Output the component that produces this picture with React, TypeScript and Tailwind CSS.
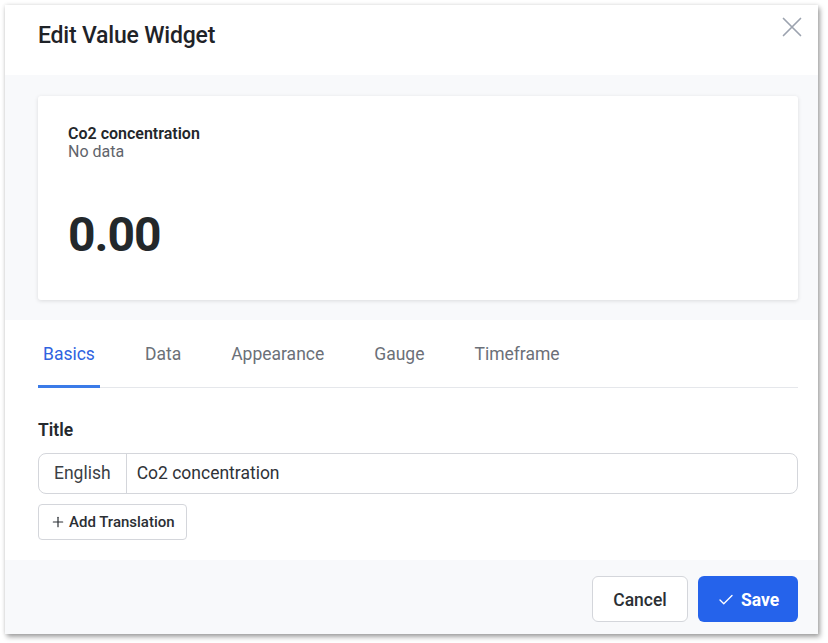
import { Plus, Check } from "lucide-react";

const tabs = ["Basics", "Data", "Appearance", "Gauge", "Timeframe"];

export default function App() {
  return (
    <div
      className="min-h-[643px] w-[828px] bg-white pl-[5px] pt-[5px]"
      style={{ fontFamily: "Roboto, 'Noto Sans', sans-serif" }}
    >
      <div className="flex h-[629px] w-[813px] flex-col bg-white shadow-[2px_3px_5px_rgba(0,0,0,0.35),0_0_4px_rgba(0,0,0,0.12)]">
        {/* header */}
        <div className="relative flex h-[70px] items-center pb-[8px] pl-[33px] pr-[20px]">
          <h2 className="text-[23px] font-medium tracking-[-0.2px] text-[#1f2328]">Edit Value Widget</h2>
          <button type="button" className="absolute right-[16px] top-[12px] text-[#9ca3af]" aria-label="Close">
            <svg width="20" height="20" viewBox="0 0 20 20" fill="none" stroke="currentColor" strokeWidth="1.7" strokeLinecap="round">
              <path d="M1.5 1.5l17 17M18.5 1.5l-17 17" />
            </svg>
          </button>
        </div>

        {/* preview */}
        <div className="bg-[#f8f9fb] pb-[20px] pl-[33px] pr-[20px] pt-[21px]">
          <div className="h-[204px] rounded-[3px] bg-white px-[30px] pt-[29px] shadow-[0_1px_4px_rgba(0,0,0,0.12)]">
            <div className="text-[16px] font-semibold leading-[18px] text-[#23272b]">Co2 concentration</div>
            <div className="text-[16px] leading-[18px] text-[#5f646b]">No data</div>
            <div className="mt-[46px] text-[48px] font-bold leading-[56px] tracking-[-1px] text-[#23282b]">0.00</div>
          </div>
        </div>

        {/* body */}
        <div className="flex-1 pl-[33px] pr-[20px] pt-[22px]">
          <div className="flex border-b border-[#e5e7eb]">
            <div className="flex gap-[40px]">
              {tabs.map((t, i) => (
                <button
                  key={t}
                  type="button"
                  className={`-mb-px border-b-[3px] px-[5px] pb-[19px] text-[17.5px] leading-6 ${
                    i === 0 ? "border-[#3b7be8] text-[#2f63e0]" : "border-transparent text-[#6b7078]"
                  }`}
                >
                  {t}
                </button>
              ))}
            </div>
          </div>

          <div className="mt-[30px] text-[17.5px] font-semibold leading-6 text-[#25292e]">Title</div>
          <div className="mt-[11px] flex h-[41px] rounded-[8px] border border-[#d4d6db]">
            <div className="flex items-center border-r border-[#d4d6db] px-[15px] text-[17.5px] text-[#3b3f45]">English</div>
            <div className="flex items-center px-[10px] text-[17.5px] text-[#2f3338]">Co2 concentration</div>
          </div>
          <button
            type="button"
            className="mt-[10px] flex h-[36px] items-center gap-[3px] rounded-[4px] border border-[#d4d6db] px-[11px] text-[15px] font-medium text-[#2b2f34]"
          >
            <Plus className="h-[16px] w-[16px]" strokeWidth={1.8} />
            Add Translation
          </button>
        </div>

        {/* footer */}
        <div className="flex h-[74px] justify-end gap-[10px] bg-[#f8f9fb] pr-[20px] pt-[16px]">
          <button
            type="button"
            className="h-[46px] w-[96px] rounded-[6px] border border-[#d4d6db] bg-white pt-[2px] text-[17.5px] font-medium text-[#2b2f34]"
          >
            Cancel
          </button>
          <button
            type="button"
            className="flex h-[46px] w-[100px] items-center justify-center gap-[6px] rounded-[6px] bg-[#2563eb] pt-[2px] text-[17.5px] font-bold text-white"
          >
            <Check className="h-[18px] w-[18px]" strokeWidth={1.8} />
            Save
          </button>
        </div>
      </div>
    </div>
  );
}
